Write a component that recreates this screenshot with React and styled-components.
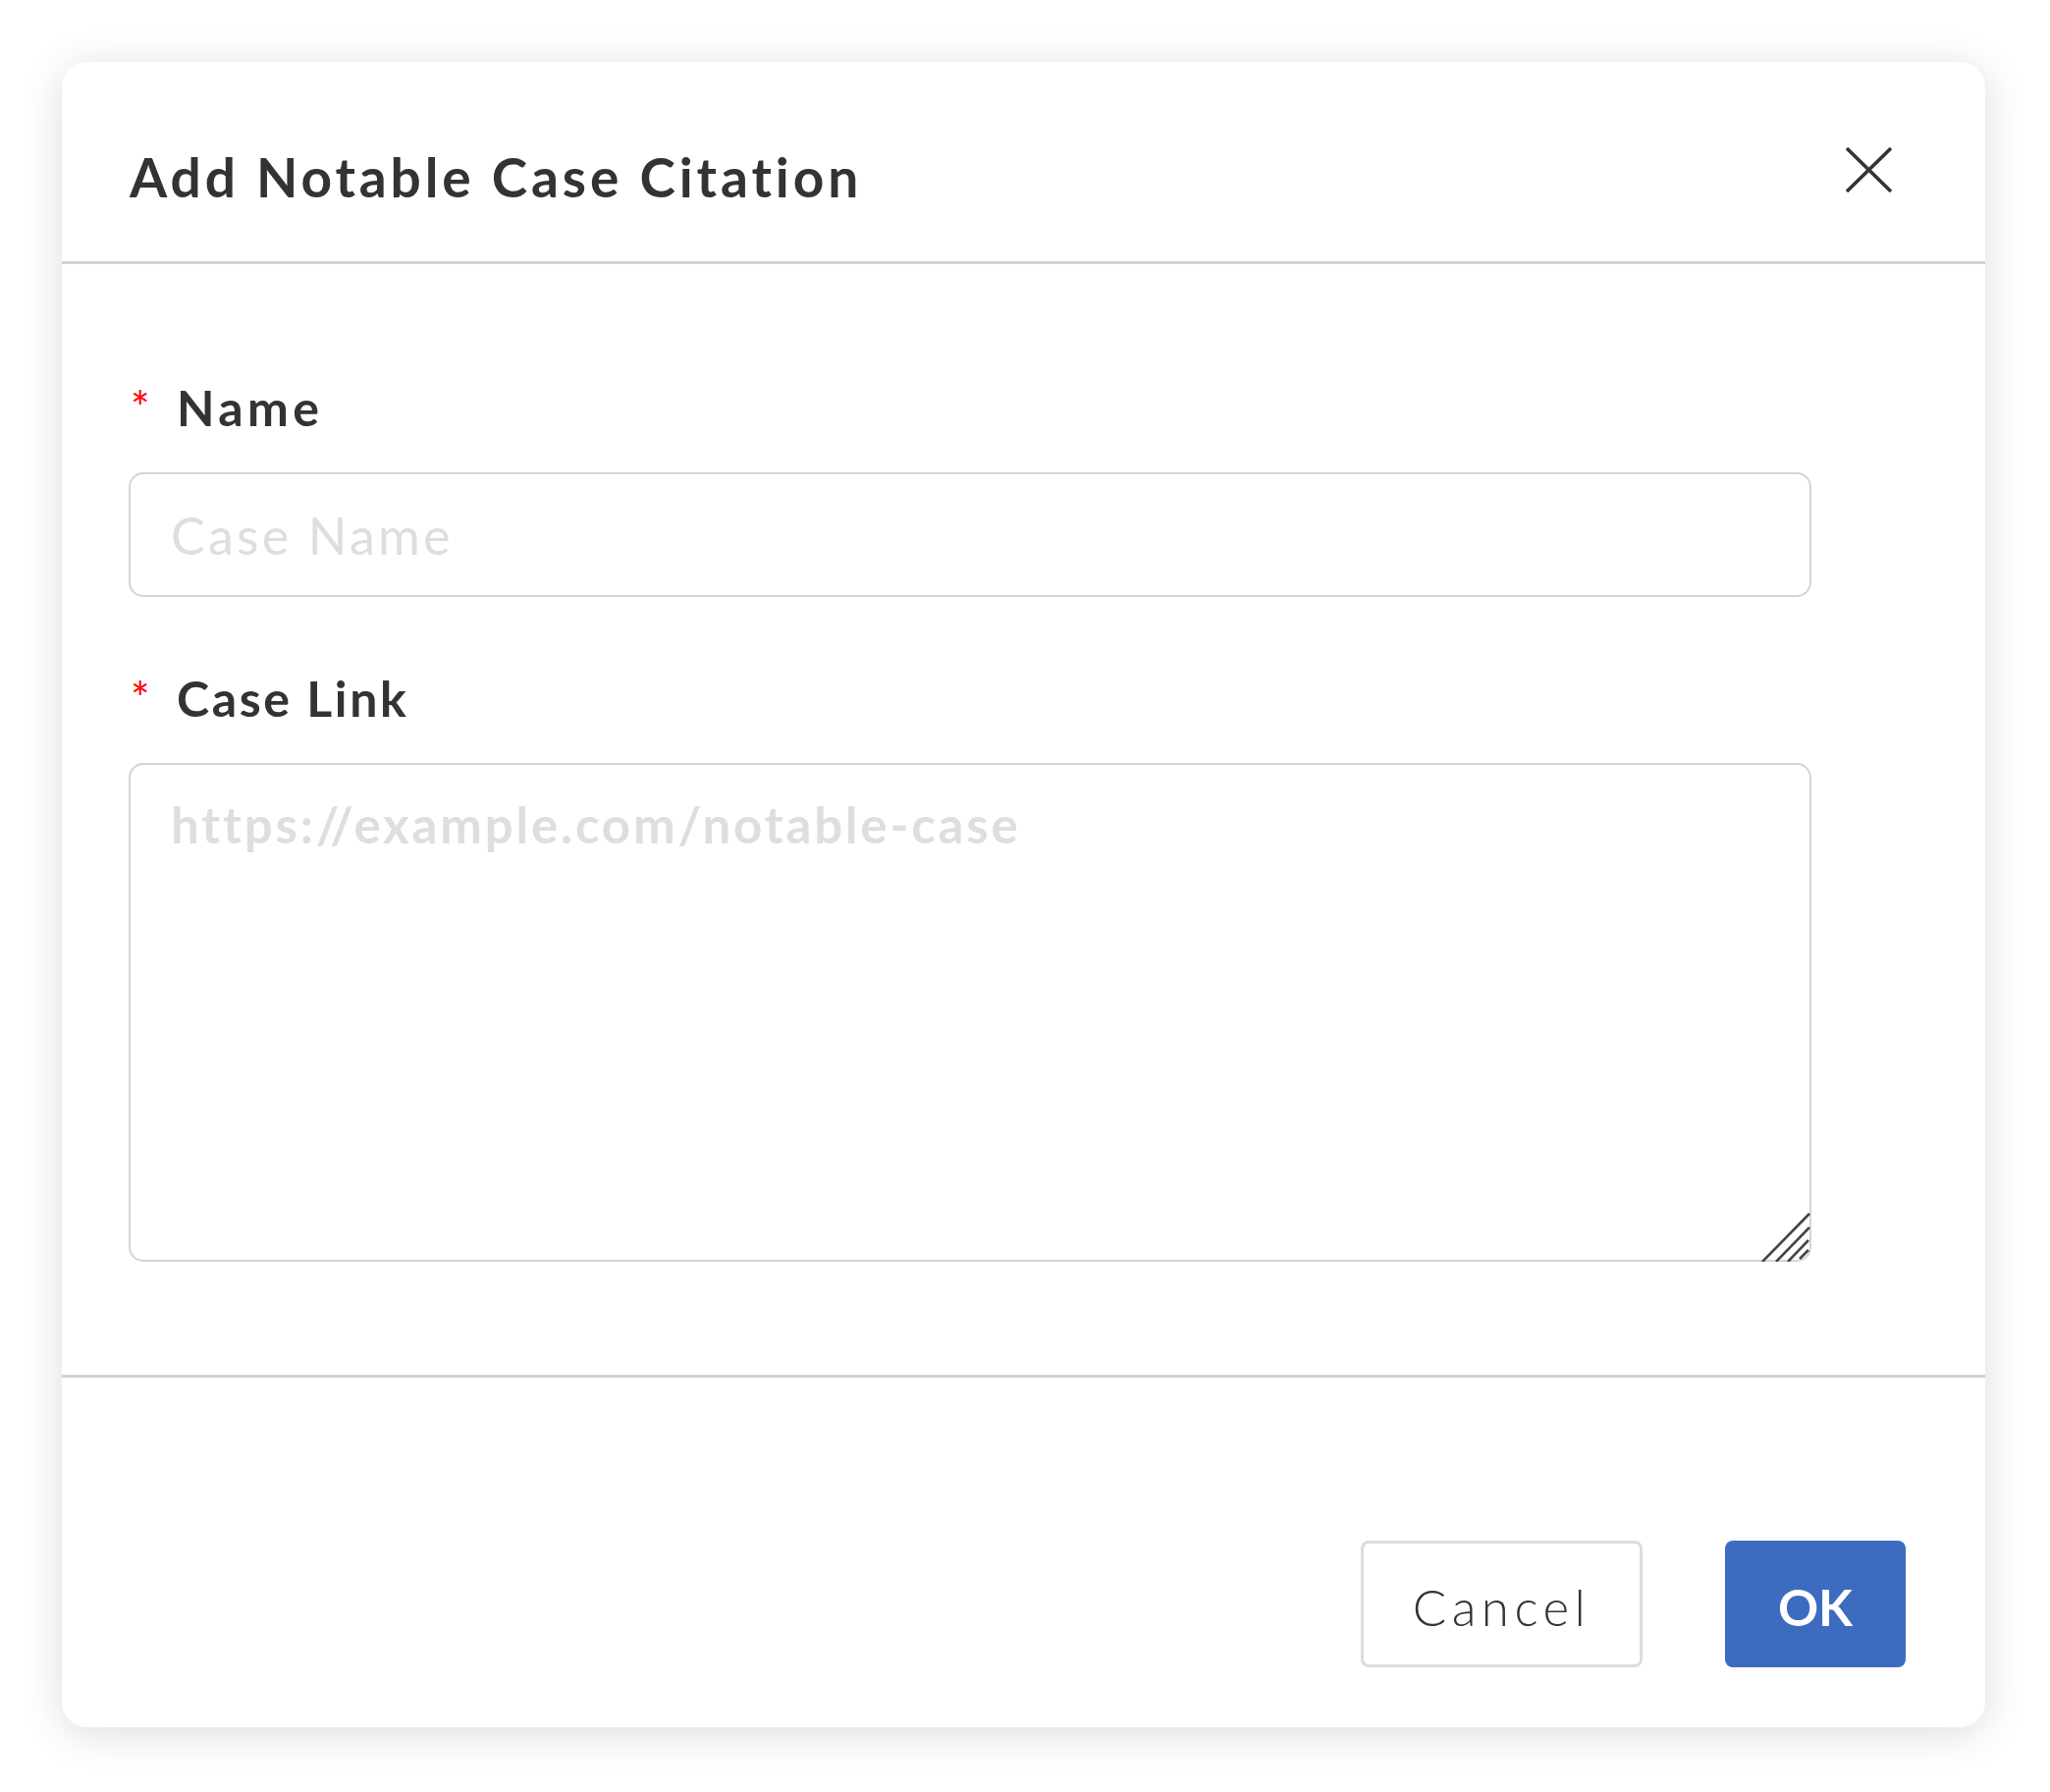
import React from 'react';
import styled, { createGlobalStyle } from 'styled-components';

const GlobalStyle = createGlobalStyle`
    *, *::before, *::after {
        box-sizing: border-box;
    }
    body {
        margin: 0;
        background: #fff;
        font-family: Lato, "Open Sans", sans-serif;
        color: #333;
    }
`;

const Page = styled.div`
    padding: 63px 66px 63px 63px;
`;

const Modal = styled.div`
    width: 1959px;
    background: #fff;
    border-radius: 26px;
    box-shadow: 0 6px 44px rgba(0, 0, 0, 0.14);
    display: flex;
    flex-direction: column;
`;

const Header = styled.div`
    height: 206px;
    display: flex;
    justify-content: space-between;
    align-items: flex-start;
    padding: 90px 94px 0 69px;
    border-bottom: 3px solid #d3d3d3;
`;

const Title = styled.h2`
    margin: 0;
    font-size: 55px;
    line-height: 55px;
    font-weight: 700;
    letter-spacing: 3.9px;
    color: #333;
`;

const CloseButton = styled.button`
    border: 0;
    padding: 0;
    margin-top: -3px;
    background: none;
    width: 49px;
    height: 46px;
    cursor: pointer;
    display: flex;
`;

const Body = styled.div`
    padding: 121px 177px 115px 68px;
    display: flex;
    flex-direction: column;
`;

const Label = styled.label`
    display: flex;
    align-items: flex-start;
    height: 50px;
    font-size: 50px;
    line-height: 50px;
    font-weight: 700;
    letter-spacing: ${props => props.$spacing || 2.6}px;
    color: #333;
    margin-top: ${props => props.$top || 0}px;
    margin-bottom: 41px;
`;

const Required = styled.span`
    color: #f00;
    font-weight: 400;
    font-size: 46px;
    line-height: 50px;
    letter-spacing: 0;
    width: 49px;
    padding-left: 2px;
`;

const TextInput = styled.input`
    display: block;
    width: 100%;
    height: 127px;
    border: 2px solid #d4d4d4;
    border-radius: 15px;
    padding: 0 41px;
    font-family: Lato, sans-serif;
    font-size: 52px;
    font-weight: 400;
    letter-spacing: 3.2px;
    color: #333;
    outline: none;

    &::placeholder {
        color: #dedede;
    }
`;

const AreaWrap = styled.div`
    position: relative;
    height: 508px;
`;

const TextArea = styled.textarea`
    display: block;
    width: 100%;
    height: 100%;
    border: 2px solid #d4d4d4;
    border-radius: 15px;
    padding: 30px 41px;
    font-family: Lato, sans-serif;
    font-size: 51px;
    line-height: 1.2;
    font-weight: 700;
    letter-spacing: 2.8px;
    color: #333;
    resize: none;
    outline: none;

    &::placeholder {
        color: #dedede;
    }
`;

const Grip = styled.svg`
    position: absolute;
    right: 0;
    bottom: 0;
    pointer-events: none;
`;

const Footer = styled.div`
    height: 359px;
    border-top: 3px solid #d3d3d3;
    display: flex;
    justify-content: flex-end;
    align-items: flex-end;
    gap: 84px;
    padding: 0 81px 61px 0;
`;

const Button = styled.button`
    height: 129px;
    width: ${props => props.$width}px;
    border-radius: 8px;
    font-family: Lato, sans-serif;
    font-size: 51px;
    line-height: 51px;
    padding: 5px 0 0;
    cursor: pointer;
    display: flex;
    align-items: center;
    justify-content: center;
    border: ${props => props.$primary ? '0' : '3px solid #dcdcdc'};
    background: ${props => props.$primary ? '#3d6bbf' : '#fff'};
    color: ${props => props.$primary ? '#fff' : '#333'};
    font-weight: ${props => props.$primary ? 700 : 300};
    letter-spacing: ${props => props.$primary ? '0' : '5.5px'};
`;

const App = () => {
    return (
        <Page>
            <GlobalStyle />
            <Modal>
                <Header>
                    <Title>Add Notable Case Citation</Title>
                    <CloseButton aria-label="Close">
                        <svg width="49" height="46" viewBox="0 0 49 46">
                            <path d="M2 1 L47 45 M47 1 L2 45" stroke="#333" strokeWidth="3.6" fill="none" />
                        </svg>
                    </CloseButton>
                </Header>
                <Body>
                    <Label $spacing={4.4}><Required>*</Required>Name</Label>
                    <TextInput placeholder="Case Name" />
                    <Label $top={78}><Required>*</Required>Case Link</Label>
                    <AreaWrap>
                        <TextArea placeholder="https://example.com/notable-case" />
                        <Grip width="52" height="52" viewBox="0 0 52 52">
                            <g stroke="#444" strokeWidth="2.6" strokeLinecap="butt">
                                <path d="M2 52 L50 3" />
                                <path d="M16 52 L50 17" />
                                <path d="M28 52 L49 30" />
                                <path d="M40 49 L49 40" />
                            </g>
                        </Grip>
                    </AreaWrap>
                </Body>
                <Footer>
                    <Button $width={287}>Cancel</Button>
                    <Button $width={184} $primary>OK</Button>
                </Footer>
            </Modal>
        </Page>
    );
};

export default App;
